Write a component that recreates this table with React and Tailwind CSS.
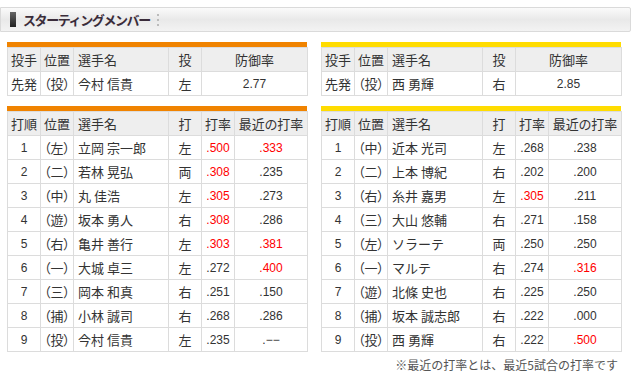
import React from 'react';

const JP = "font-['Noto_Sans_CJK_JP','Noto_Sans',sans-serif]";
const NUM = "font-['Liberation_Sans','Noto_Sans_CJK_JP',sans-serif]";

const teams = [
  {
    color: 'bg-[#f08300]',
    pitcher: { pos: '（投）', name: '今村 信貴', hand: '左', era: '2.77' },
    batters: [
      ['1', '（左）', '立岡 宗一郎', '左', '.500', '.333', true, true],
      ['2', '（二）', '若林 晃弘', '両', '.308', '.235', true, false],
      ['3', '（中）', '丸 佳浩', '左', '.305', '.273', true, false],
      ['4', '（遊）', '坂本 勇人', '右', '.308', '.286', true, false],
      ['5', '（右）', '亀井 善行', '左', '.303', '.381', true, true],
      ['6', '（一）', '大城 卓三', '左', '.272', '.400', false, true],
      ['7', '（三）', '岡本 和真', '右', '.251', '.150', false, false],
      ['8', '（捕）', '小林 誠司', '右', '.268', '.286', false, false],
      ['9', '（投）', '今村 信貴', '左', '.235', '.−−', false, false],
    ],
  },
  {
    color: 'bg-[#ffdc00]',
    pitcher: { pos: '（投）', name: '西 勇輝', hand: '右', era: '2.85' },
    batters: [
      ['1', '（中）', '近本 光司', '左', '.268', '.238', false, false],
      ['2', '（二）', '上本 博紀', '右', '.202', '.200', false, false],
      ['3', '（右）', '糸井 嘉男', '左', '.305', '.211', true, false],
      ['4', '（三）', '大山 悠輔', '右', '.271', '.158', false, false],
      ['5', '（左）', 'ソラーテ', '両', '.250', '.250', false, false],
      ['6', '（一）', 'マルテ', '右', '.274', '.316', false, true],
      ['7', '（遊）', '北條 史也', '右', '.225', '.250', false, false],
      ['8', '（捕）', '坂本 誠志郎', '右', '.222', '.000', false, false],
      ['9', '（投）', '西 勇輝', '右', '.222', '.500', false, true],
    ],
  },
];

const th = `h-[24px] border border-[#dcdcdc] bg-[#eeeeee] font-normal text-[#333] text-[13px] ${JP} [font-feature-settings:'palt'] p-0`;
const td = `h-[24px] border border-[#dcdcdc] bg-white text-[#333] p-0`;
const jp = `${JP} text-[13px]`;
const num = `${NUM} text-[12px]`;

const PitcherTable = ({ color, p }) => (
  <div className="w-[300px]">
    <div className={`h-[5px] ${color}`}></div>
    <table className="w-[300px] table-fixed border-collapse">
      <colgroup>
        <col className="w-[33px]" />
        <col className="w-[33px]" />
        <col className="w-[95px]" />
        <col className="w-[33px]" />
        <col className="w-[106px]" />
      </colgroup>
      <thead>
        <tr>
          <th className={`${th} text-center`}>投手</th>
          <th className={`${th} text-center`}>位置</th>
          <th className={`${th} text-left pl-[4px]`}>選手名</th>
          <th className={`${th} text-center`}>投</th>
          <th className={`${th} text-center`}>防御率</th>
        </tr>
      </thead>
      <tbody>
        <tr>
          <td className={`${td} ${jp} text-center`}>先発</td>
          <td className={`${td} ${jp} text-center [font-feature-settings:'palt']`}>{p.pos}</td>
          <td className={`${td} ${jp} text-left pl-[4px] text-[#0066a8]`}>{p.name}</td>
          <td className={`${td} ${jp} text-center`}>{p.hand}</td>
          <td className={`${td} ${num} text-center`}>{p.era}</td>
        </tr>
      </tbody>
    </table>
  </div>
);

const BatterTable = ({ color, rows }) => (
  <div className="w-[300px]">
    <div className={`h-[5px] ${color}`}></div>
    <table className="w-[300px] table-fixed border-collapse">
      <colgroup>
        <col className="w-[33px]" />
        <col className="w-[33px]" />
        <col className="w-[95px]" />
        <col className="w-[33px]" />
        <col className="w-[33px]" />
        <col className="w-[73px]" />
      </colgroup>
      <thead>
        <tr>
          <th className={`${th} text-center`}>打順</th>
          <th className={`${th} text-center`}>位置</th>
          <th className={`${th} text-left pl-[4px]`}>選手名</th>
          <th className={`${th} text-center`}>打</th>
          <th className={`${th} text-center`}>打率</th>
          <th className={`${th} text-center`}>最近の打率</th>
        </tr>
      </thead>
      <tbody>
        {rows.map(([no, pos, name, hand, avg, recent, avgRed, recentRed]) => (
          <tr key={no}>
            <td className={`${td} ${num} text-center`}>{no}</td>
            <td className={`${td} ${jp} text-center [font-feature-settings:'palt']`}>{pos}</td>
            <td className={`${td} ${jp} text-left pl-[4px] text-[#0066a8]`}>{name}</td>
            <td className={`${td} ${jp} text-center`}>{hand}</td>
            <td className={`${td} ${num} text-center ${avgRed ? 'text-[#ff0000]' : ''}`}>{avg}</td>
            <td className={`${td} ${num} text-center ${recentRed ? 'text-[#ff0000]' : ''}`}>{recent}</td>
          </tr>
        ))}
      </tbody>
    </table>
  </div>
);

export default function App() {
  return (
    <div className="w-[643px] h-[384px] bg-white pt-[7px] overflow-hidden">
      {/* section header */}
      <div className="w-[631px] h-[25px] flex items-center border border-[#dadada] rounded-r-[2px] bg-gradient-to-b from-[#fafafa] via-[#e9e9e9] to-[#f3f3f3]">
        <div className="ml-[9px] w-[6px] h-[15px] bg-gradient-to-b from-[#666] to-[#222]"></div>
        <div className={`ml-[7px] text-[13px] font-bold tracking-[-1.4px] text-[#3a2c3a] ${JP}`}>スターティングメンバー</div>
        <div className="ml-[7px] flex flex-col gap-[3px]">
          <div className="w-[2px] h-[2px] bg-[#bbb]"></div>
          <div className="w-[2px] h-[2px] bg-[#bbb]"></div>
          <div className="w-[2px] h-[2px] bg-[#bbb]"></div>
        </div>
      </div>

      <div className="flex gap-[14px] pl-[7px] mt-[10px]">
        {teams.map((t, i) => (
          <PitcherTable key={i} color={t.color} p={t.pitcher} />
        ))}
      </div>

      <div className="flex gap-[14px] pl-[7px] mt-[10px]">
        {teams.map((t, i) => (
          <div key={i} className="w-[300px]">
            <BatterTable color={t.color} rows={t.batters} />
            {i === 1 && (
              <div className={`mt-[4px] pr-[3px] text-right text-[12px] text-[#555] ${JP}`}>
                ※最近の打率とは、最近5試合の打率です
              </div>
            )}
          </div>
        ))}
      </div>
    </div>
  );
}
